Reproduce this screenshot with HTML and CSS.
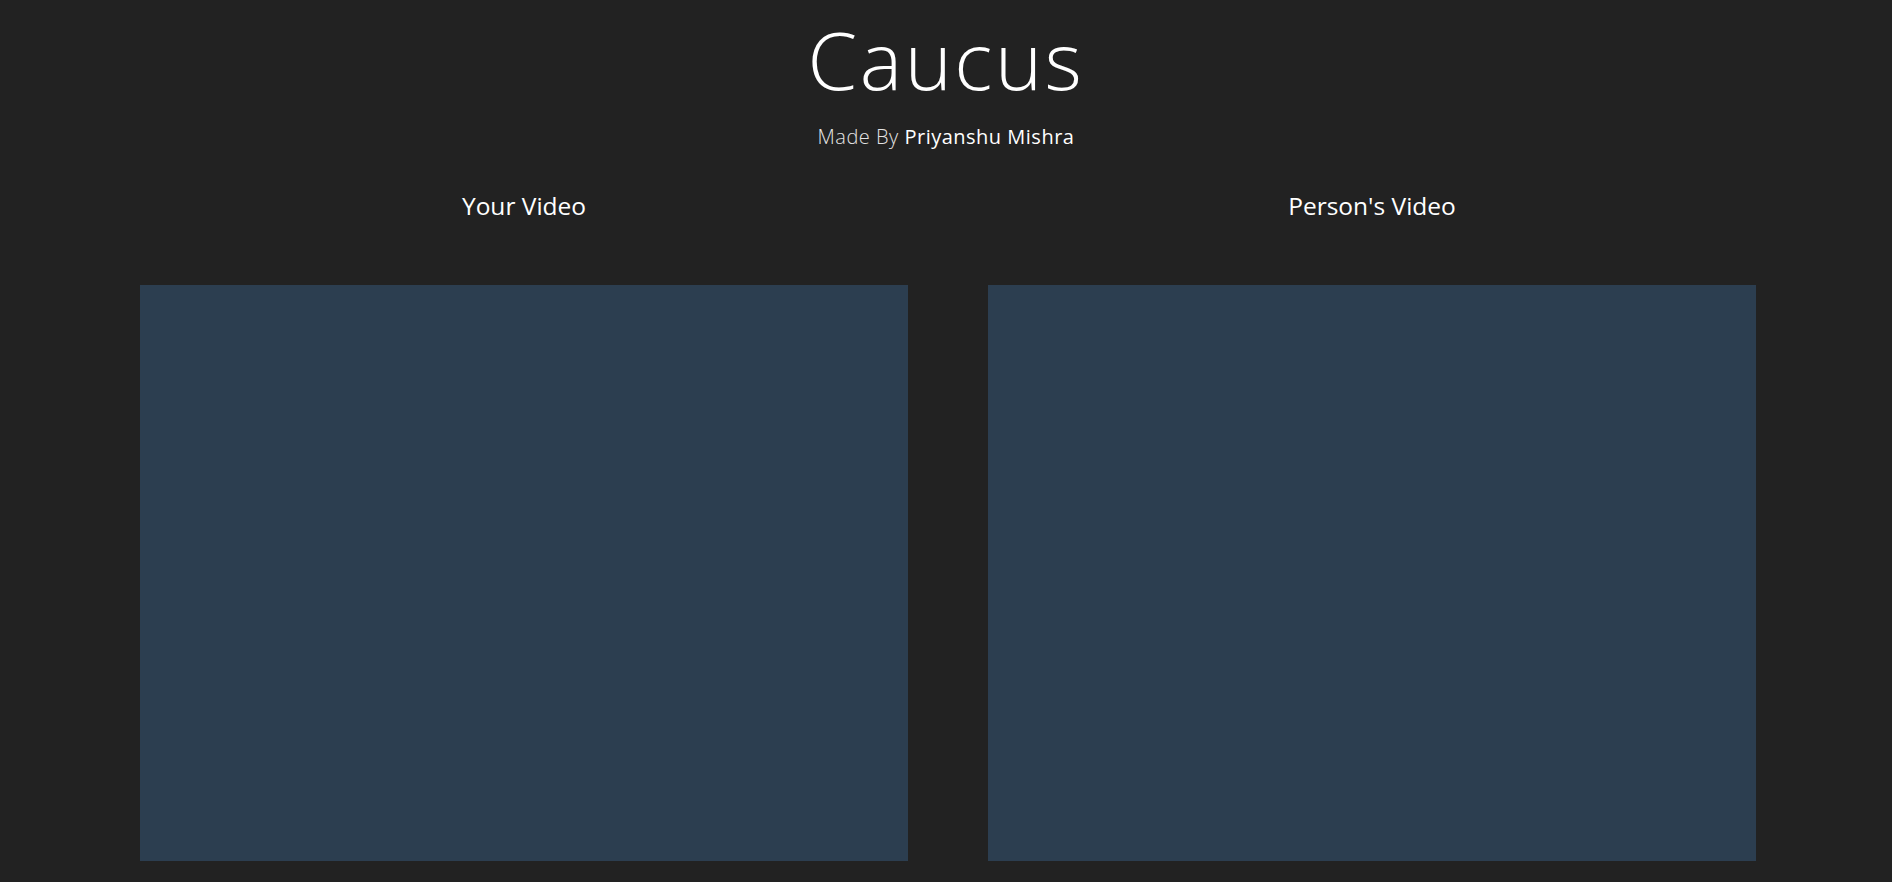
FILE: index.html
```html
<!DOCTYPE html>
<html lang="en">
<head>
<meta charset="utf-8">
<title>Caucus</title>
<link rel="stylesheet" href="styles.css">
</head>
<body>
<header class="header">
  <h1 class="title">Caucus</h1>
  <p class="credit"><span class="credit-label">Made By</span> <span class="credit-name">Priyanshu Mishra</span></p>
</header>
<main class="videos">
  <section class="video-col">
    <h2 class="video-title">Your Video</h2>
    <div class="video-box"></div>
  </section>
  <section class="video-col">
    <h2 class="video-title">Person's Video</h2>
    <div class="video-box"></div>
  </section>
</main>
</body>
</html>
```
FILE: styles.css
```css
html, body {
  margin: 0;
  padding: 0;
  background: #222222;
  color: #ffffff;
  font-family: "Open Sans", "Noto Sans", sans-serif;
}

body {
  height: 882px;
  overflow: hidden;
}

.header {
  display: flex;
  flex-direction: column;
  align-items: center;
}

.title {
  margin: 19px 0 0;
  font-size: 80px;
  line-height: 80px;
  font-weight: 300;
  letter-spacing: 2.5px;
}

.credit {
  margin: 26px 0 0;
  font-size: 20px;
  line-height: 24px;
  letter-spacing: 0.5px;
}

.credit-label {
  font-weight: 300;
  color: #e4e4e4;
}

.credit-name {
  font-weight: 400;
}

.videos {
  display: flex;
  justify-content: center;
  gap: 80px;
  margin-top: 42px;
  padding-left: 4px;
}

.video-col {
  display: flex;
  flex-direction: column;
  align-items: center;
}

.video-title {
  margin: 0;
  font-size: 24.5px;
  line-height: 30px;
  font-weight: 400;
}

.video-box {
  margin-top: 64px;
  width: 768px;
  height: 576px;
  background: #2c3e50;
}
```
